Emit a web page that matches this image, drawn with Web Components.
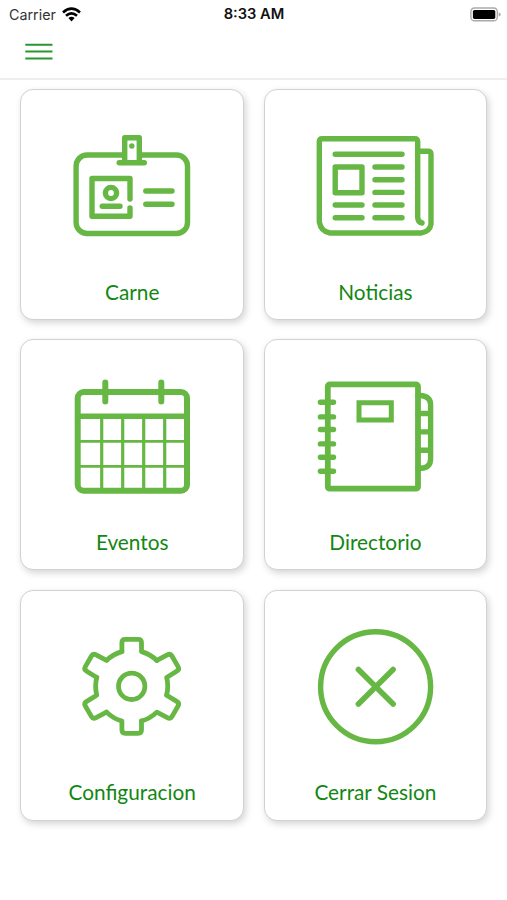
<!DOCTYPE html>
<html lang="es">
<head>
<meta charset="utf-8">
<meta name="viewport" content="width=device-width, initial-scale=1">
<title>Menu</title>
<style>
  body {
    margin: 0;
    background: #fff;
    font-family: Lato, sans-serif;
  }
</style>
</head>
<body>
<app-shell>
  <status-bar slot="status" carrier="Carrier" time="8:33 AM"></status-bar>
  <app-header slot="header"></app-header>
  <menu-card icon="badge">Carne</menu-card>
  <menu-card icon="news">Noticias</menu-card>
  <menu-card icon="calendar">Eventos</menu-card>
  <menu-card icon="directory">Directorio</menu-card>
  <menu-card icon="gear">Configuracion</menu-card>
  <menu-card icon="close">Cerrar Sesion</menu-card>
</app-shell>

<script>
// One tooth plus the arc that leads to the next one, the side teeth are a bit longer
const gearTeeth = [0, 60, 120, 180, 240, 300]
  .map(angle => {
    const tip = angle % 180 === 0 ? 47 : 50;
    const half = angle % 180 === 0 ? 9.8 : 9.4;
    return `<path transform="rotate(${angle})" d="M-9.8 -34.7L${-half} ${3.5 - tip}Q${-half} ${-tip} ${3.3 - half} ${-tip}H${half - 3.3}Q${half} ${-tip} ${half} ${3.5 - tip}L9.8 -34.7A36 36 0 0 1 25.15 -25.8"/>`;
  })
  .join('');

const icons = {
  badge: `
    <rect x="14.1" y="36" width="111.4" height="78.5" rx="11"/>
    <path fill="#fff" d="M62.7 43.5V18.8H77.3V43.5"/>
    <path d="M57.2 43.7H82.3"/>
    <circle cx="69.8" cy="27" r="2.7" fill="currentColor" stroke="none"/>
    <path d="M68 80V59.5H30V97.3H68V89"/>
    <circle cx="49" cy="74" r="5.6"/>
    <path d="M40.2 87.2H58M83.8 72H110M83.8 85.3H110"/>`,
  news: `
    <path d="M112.7 32.3H123Q126 32.3 126 35.3V105Q125 112.5 116 114H25Q16 112.5 14.3 103V22.7Q14.3 19.7 17.3 19.7H109.7Q112.7 19.7 112.7 22.7V98Q112.7 103.3 117 104"/>
    <path d="M30.2 35.3H97M30.2 48H57V73.7H30.2ZM70 48H97M70 60.7H97M70 73.4H97M70 86H97M70 98.7H97M30.2 86H57M30.2 98.7H57"/>`,
  calendar: `
    <g transform="translate(0 .9)">
      <rect x="15.7" y="22.2" width="109.3" height="98.6" rx="6" stroke-width="6"/>
      <path d="M15.7 46.3H125"/>
      <path stroke-width="2.8" d="M15.7 71.5H125M15.7 96.5H125"/>
      <path stroke-width="3.2" d="M39.7 46V120M60.7 46V120M81.7 46V120M102.7 46V120"/>
      <path stroke-width="6" d="M43.3 12.5V31.5M99.3 12.5V31.5"/>
    </g>`,
  directory: `
    <g transform="translate(0 .7)">
      <rect x="22.8" y="14.7" width="90.2" height="104.3" rx="2" stroke-width="5.8"/>
      <path d="M15.4 32.5H28.5M15.4 47.2H28.5M15.4 59.8H28.5M15.4 74.2H28.5M15.4 87.5H28.5M15.4 101.5H28.5"/>
      <path stroke-linejoin="miter" d="M54 33H86.3V50.3H54Z" stroke-width="5"/>
      <path d="M113 25.8H116Q125.6 27 125.6 35V89Q125.6 98 116 98.6H113M113 43.8H125M113 62.2H125M113 80.5H125"/>
    </g>`,
  gear: `
    <g transform="translate(69.7 66.3)" stroke-width="4.8">
      ${gearTeeth}
      <circle r="13.2"/>
    </g>`,
  close: `
    <circle cx="70.6" cy="66.8" r="55"/>
    <path stroke-width="5.6" d="M53.4 49.5L88.1 84M88.1 49.5L53.4 84"/>`
};

class AppShell extends HTMLElement {
  constructor() {
    super();
    this.attachShadow({ mode: 'open' });
    this.shadowRoot.innerHTML = `
      <style>
        :host {
          display: flex;
          flex-direction: column;
          height: 900px;
          overflow: hidden;
        }

        main {
          display: grid;
          grid-template-columns: repeat(2, 1fr);
          grid-auto-rows: 231px;
          gap: 19.3px 19.4px;
          padding: 9px 19.7px 0 20.3px;
        }
      </style>
      <slot name="status"></slot>
      <slot name="header"></slot>
      <main><slot></slot></main>
    `;
  }
}

customElements.define('app-shell', AppShell);

class StatusBar extends HTMLElement {
  constructor() {
    super();
    this.attachShadow({ mode: 'open' });
  }

  connectedCallback() {
    this.shadowRoot.innerHTML = `
      <style>
        :host {
          display: grid;
          grid-template-columns: 1fr auto 1fr;
          align-items: center;
          height: 27px;
          padding: 0 6px 0 9px;
          font: 14.3px/27px Inter, sans-serif;
          color: #333;
        }

        .carrier {
          display: flex;
          align-items: center;
          gap: 6px;
        }

        .time {
          margin-right: 2px;
          padding-top: 1px;
          font-size: 14.7px;
          font-weight: 600;
          color: #111;
        }

        .battery {
          justify-self: end;
        }

        svg {
          display: block;
        }
      </style>
      <div class="carrier">
        <span>${this.getAttribute('carrier')}</span>
        <svg width="19" height="15" viewBox="0 0 19 15" fill="none" stroke="#000" stroke-width="2.7">
          <path d="M1 5.4Q9.5 -2 18 5.4M4 8.7Q9.5 4 15 8.7"/>
          <path fill="#000" stroke="none" d="M6.4 11.1Q9.5 8.6 12.6 11.1L9.5 14.4Z"/>
        </svg>
      </div>
      <span class="time">${this.getAttribute('time')}</span>
      <svg class="battery" width="31" height="15" viewBox="0 0 31 15">
        <rect x=".9" y="1" width="26.4" height="12.8" rx="3.6" fill="#fff" stroke="#aaa" stroke-width="1.4"/>
        <rect x="2.9" y="2.9" width="22.4" height="9" rx="1.6" fill="#000"/>
        <path d="M28.7 5.2Q30.8 6 30.8 7.4T28.7 9.6Z" fill="#aaa"/>
      </svg>
    `;
  }
}

customElements.define('status-bar', StatusBar);

class AppHeader extends HTMLElement {
  constructor() {
    super();
    this.attachShadow({ mode: 'open' });
    this.shadowRoot.innerHTML = `
      <style>
        :host {
          display: flex;
          align-items: center;
          box-sizing: border-box;
          height: 53px;
          padding: 0 25px 1px;
          border-bottom: 2px solid #eee;
        }

        button {
          padding: 0;
          border: 0;
          background: none;
          color: #2a962d;
          cursor: pointer;
        }

        svg {
          display: block;
        }
      </style>
      <button type="button" aria-label="Menu">
        <svg width="28" height="18" viewBox="0 0 28 18" stroke="currentColor" stroke-width="2">
          <path d="M.3 1.8H27.5M.3 8.6H27.5M.3 15.4H27.5"/>
        </svg>
      </button>
    `;
  }
}

customElements.define('app-header', AppHeader);

class MenuCard extends HTMLElement {
  constructor() {
    super();
    this.attachShadow({ mode: 'open' });
  }

  connectedCallback() {
    this.shadowRoot.innerHTML = `
      <style>
        :host {
          display: flex;
          flex-direction: column;
          align-items: center;
          box-sizing: border-box;
          padding-top: 29px;
          border: 1px solid #d2d2d2;
          border-radius: 13px;
          background: #fff;
          box-shadow: 2px 3px 7px rgba(0, 0, 0, 0.17);
          font-size: 20.8px;
          line-height: 28px;
          color: #138713;
          cursor: pointer;
        }

        svg {
          display: block;
          color: #67b744;
        }

        .label {
          margin-top: 18.8px;
        }
      </style>
      <svg width="140" height="140" viewBox="0 0 140 140" fill="none" stroke="currentColor" stroke-width="5.4" stroke-linecap="round" stroke-linejoin="round">
        ${icons[this.getAttribute('icon')]}
      </svg>
      <span class="label"><slot></slot></span>
    `;
  }
}

customElements.define('menu-card', MenuCard);
</script>
</body>
</html>
